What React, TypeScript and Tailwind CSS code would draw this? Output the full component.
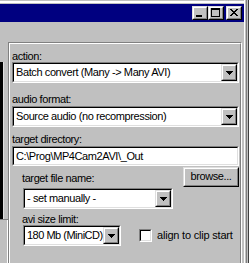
import React from "react";

const Raised: React.FC<{ className?: string; children?: React.ReactNode }> = ({
  className = "",
  children,
}) => (
  <div
    className={`border border-t-[#dfdfdf] border-l-[#dfdfdf] border-r-black border-b-black ${className}`}
  >
    <div className="w-full h-full border border-t-white border-l-white border-r-[#808080] border-b-[#808080] bg-[#c0c0c0] flex items-center justify-center">
      {children}
    </div>
  </div>
);

const Sunken: React.FC<{ className?: string; children?: React.ReactNode }> = ({
  className = "",
  children,
}) => (
  <div
    className={`border border-t-[#808080] border-l-[#808080] border-r-white border-b-white ${className}`}
  >
    <div className="w-full h-full border border-t-black border-l-black border-r-[#dfdfdf] border-b-[#dfdfdf] bg-white flex items-center">
      {children}
    </div>
  </div>
);

const Arrow = () => (
  <svg width="7" height="4" shapeRendering="crispEdges" className="mt-px">
    <rect x="0" y="0" width="7" height="1" fill="#000" />
    <rect x="1" y="1" width="5" height="1" fill="#000" />
    <rect x="2" y="2" width="3" height="1" fill="#000" />
    <rect x="3" y="3" width="1" height="1" fill="#000" />
  </svg>
);

const Combo: React.FC<{ text: string; className?: string; textClass?: string }> = ({
  text,
  className = "",
  textClass = "",
}) => (
  <Sunken className={`h-[21px] ${className}`}>
    <span className={`flex-1 pl-[2px] whitespace-nowrap overflow-hidden leading-[13px] ${textClass}`}>
      {text}
    </span>
    <Raised className="w-[16px] h-[17px] shrink-0">
      <Arrow />
    </Raised>
  </Sunken>
);

const Label: React.FC<{ children: React.ReactNode; className?: string }> = ({
  children,
  className = "",
}) => <div className={`h-[12px] leading-[12px] whitespace-nowrap ${className}`}>{children}</div>;

const TitleBtn: React.FC<{ kind: "min" | "max" | "close" }> = ({ kind }) => (
  <Raised className="w-[16px] h-[14px]">
    <svg width="12" height="10" shapeRendering="crispEdges">
      {kind === "min" && <rect x="2" y="7" width="6" height="2" fill="#000" />}
      {kind === "max" && (
        <g fill="#000">
          <rect x="1" y="0" width="9" height="2" />
          <rect x="1" y="0" width="1" height="9" />
          <rect x="9" y="0" width="1" height="9" />
          <rect x="1" y="8" width="9" height="1" />
        </g>
      )}
      {kind === "close" && (
        <g fill="#000">
          {[0, 1, 2, 3, 4, 5, 6].map((i) => (
            <React.Fragment key={i}>
              <rect x={2 + i} y={1 + i} width="2" height="1" />
              <rect x={8 - i} y={1 + i} width="2" height="1" />
            </React.Fragment>
          ))}
        </g>
      )}
    </svg>
  </Raised>
);

export default function App() {
  return (
    <div className="w-[249px] h-[263px] bg-[#c0c0c0] flex overflow-hidden text-[11px] tracking-[-0.4px] text-black font-['Liberation_Sans',Arial,sans-serif]">
      <div className="w-[244px] flex flex-col">
        <div className="h-px" />
        <div className="h-[2px] bg-white" />
        <div className="h-px" />
        {/* title bar */}
        <div className="h-[18px] bg-[#000080] flex justify-end items-start pt-[2px] pr-[2px]">
          <TitleBtn kind="min" />
          <TitleBtn kind="max" />
          <div className="w-[2px]" />
          <TitleBtn kind="close" />
        </div>
        <div className="h-[20px]" />

        <div className="flex flex-1">
          {/* edge of the neighbouring list */}
          <div className="w-[8px] flex flex-col">
            <div className="h-[20px]" />
            <div className="h-[157px] w-[4px] bg-black border-r border-[#dfdfdf]" />
            <div className="h-px w-[8px] bg-[#808080]" />
            <div className="flex-1 border-r border-white" />
          </div>

          {/* group panel */}
          <div className="w-[234px] border-t border-l border-r border-t-[#808080] border-l-[#808080] border-r-white">
            <div className="h-full border-t border-l border-r border-t-white border-l-white border-r-[#808080] flex flex-col pl-[2px] pr-[1px]">
              <Label className="mt-[6px]">action:</Label>
              <Combo text="Batch convert (Many -> Many AVI)" />

              <Label className="mt-[10px]">audio format:</Label>
              <Combo className="mt-px" text="Source audio (no recompression)" />

              <Label className="mt-[6px]">target directory:</Label>
              <Sunken className="h-[20px] mt-px">
                <span className="pl-[2px] whitespace-nowrap leading-[13px]">C:\Prog\MP4Cam2AVI\_Out</span>
              </Sunken>

              <div className="flex justify-between items-start h-[22px]">
                <Label className="mt-[6px] ml-[10px]">target file name:</Label>
                <Raised className="w-[56px] h-[20px] mt-px">
                  <span className="leading-[13px] pb-px">browse...</span>
                </Raised>
              </div>

              <Combo className="w-[150px] ml-[11px]" text="- set manually -" />

              <Label className="mt-[4px] ml-[10px]">avi size limit:</Label>
              <div className="flex items-center ml-[11px]">
                <Combo className="w-[98px]" textClass="tracking-[-0.5px]" text="180 Mb (MiniCD)" />
                <Sunken className="w-[13px] h-[13px] ml-[18px]" />
                <span className="ml-[5px] whitespace-nowrap tracking-[-0.2px]">align to clip start</span>
              </div>
            </div>
          </div>
        </div>
      </div>

      {/* window right border */}
      <div className="w-px bg-white" />
      <div className="w-px bg-[#c0c0c0]" />
      <div className="w-px bg-[#808080]" />
      <div className="w-px bg-[#c0c0c0]" />
      <div className="w-px bg-[#404040]" />
    </div>
  );
}
